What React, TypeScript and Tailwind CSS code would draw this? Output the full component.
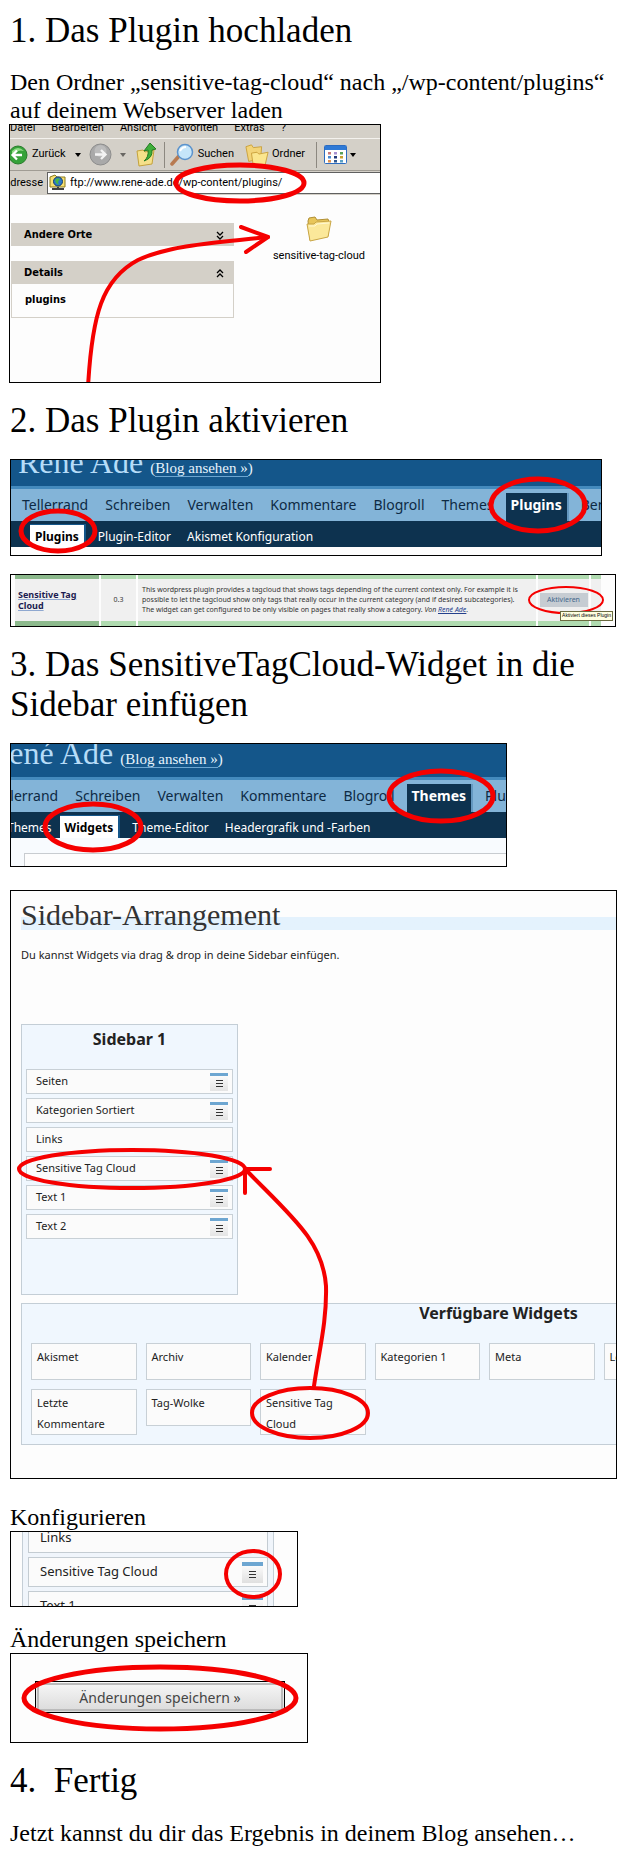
import React from "react";

type Ring = { cx: number; cy: number; rx: number; ry: number; w?: number };

function Marks({ rings = [], paths = [] }: { rings?: Ring[]; paths?: string[] }) {
  return (
    <svg
      className="pointer-events-none absolute left-0 top-0 h-full w-full overflow-hidden"
      fill="none"
      stroke="#f50000"
      strokeLinecap="round"
      strokeLinejoin="round"
      aria-hidden="true"
    >
      {rings.map((r, i) => (
        <ellipse key={i} cx={r.cx} cy={r.cy} rx={r.rx} ry={r.ry} strokeWidth={r.w ?? 5} />
      ))}
      {paths.map((d, i) => (
        <path key={i} d={d} strokeWidth={4} />
      ))}
    </svg>
  );
}

function Heading({ children }: { children: React.ReactNode }) {
  return <h2 className="text-[35px] leading-[40px]">{children}</h2>;
}

function Shot({ className, children }: { className: string; children: React.ReactNode }) {
  return (
    <figure className={`relative overflow-hidden border border-black bg-[#fdfdfd] ${className}`}>{children}</figure>
  );
}

function FolderShape() {
  return (
    <>
      <path d="M2 5 L3 2 L9 1 L11 4 L22 3 L23 6 L22 20 L4 24 Z" fill="#e8c65a" stroke="#b08f35" />
      <path d="M1 8 L8 8 L10 6 L25 5 L22 21 L4 25 Z" fill="#fbe89a" stroke="#c9a646" />
      <path d="M3 10 L9 10 L11 8 L23 7" fill="none" stroke="#fff8d4" />
    </>
  );
}

function Caret() {
  return (
    <svg width="6" height="4" viewBox="0 0 6 4" aria-hidden="true">
      <path d="M0 0 H6 L3 4 Z" fill="#000" />
    </svg>
  );
}

function Chevrons({ up }: { up?: boolean }) {
  return (
    <svg width="8" height="9" viewBox="0 0 8 9" fill="none" stroke="#000" strokeWidth="1.3" aria-hidden="true">
      {up ? <path d="M1 4 L4 1 L7 4 M1 8 L4 5 L7 8" /> : <path d="M1 1 L4 4 L7 1 M1 5 L4 8 L7 5" />}
    </svg>
  );
}

function ExplorerShot() {
  const dots = ["#c87878", "#a890d0", "#58a058", "#4888d0", "#203878", "#c8a030", "#e09050", "#305890", "#58a0c8"];
  return (
    <Shot className="-ml-px h-[259px] max-w-[372px] font-[Roboto,sans-serif]! text-[11px]">
      <div className="bg-[#d4d0c8]">
        <div className="flex h-[14px] items-end gap-[16px] overflow-hidden border-b border-[#f4f2ee] pb-[5px] leading-[11px]">
          <span>Datei</span>
          <span>Bearbeiten</span>
          <span>Ansicht</span>
          <span>Favoriten</span>
          <span>Extras</span>
          <span>?</span>
        </div>
        <div className="flex h-[32px] items-center border-b border-[#a09c94]">
          <button className="flex items-center">
            <svg className="-ml-[2px] mr-[4px]" width="20" height="20" viewBox="0 0 20 20" aria-hidden="true">
              <circle cx="10" cy="10" r="9" fill="#36a23a" stroke="#2a7c2c" />
              <path d="M4 6 Q10 0 16 6 Q10 4 4 9 Z" fill="#8fdc86" />
              <path d="M14 10 H5 M9 5.500 L4.500 10 L9 14.500" fill="none" stroke="#fff" strokeWidth="2.300" />
            </svg>
            Zurück
          </button>
          <span className="ml-[9px]">
            <Caret />
          </span>
          <svg className="ml-[8px]" width="23" height="23" viewBox="0 0 23 23" aria-hidden="true">
            <circle cx="11.500" cy="11.500" r="10.500" fill="#a9a9a9" stroke="#8c8c8c" />
            <circle cx="11.500" cy="8" r="6" fill="#bcbcbc" />
            <path d="M6 11.500 H16 M12 7 L16.500 11.500 L12 16" fill="none" stroke="#f4f4f4" strokeWidth="2.400" />
          </svg>
          <span className="ml-[8px] opacity-50">
            <Caret />
          </span>
          <svg className="ml-[10px]" width="21" height="25" viewBox="0 0 21 25" aria-hidden="true">
            <path d="M1 9 L7 8 L9 10 L18 8 L16 22 L3 24 Z" fill="#f5e08a" stroke="#c4a23c" />
            <path d="M8 19 Q13 15 12 8 L8 9 L14 1 L20 7 L16 8 Q17 16 8 19 Z" fill="#3fae3a" stroke="#247a22" />
          </svg>
          <span className="ml-[7px] h-[26px] w-px bg-[#8c8880]" />
          <svg className="ml-[5px]" width="24" height="24" viewBox="0 0 24 24" aria-hidden="true">
            <path d="M9 13 L2 21" stroke="#b87a50" strokeWidth="3.500" strokeLinecap="round" />
            <circle cx="15" cy="9" r="7.500" fill="#c6e6fa" stroke="#5c93cc" strokeWidth="1.500" />
            <path d="M10 8 Q12 4 16 4" stroke="#fff" strokeWidth="2" fill="none" />
          </svg>
          <button className="ml-[4px]">Suchen</button>
          <svg className="ml-[11px]" width="24" height="24" viewBox="0 0 26 26" aria-hidden="true">
            <path d="M1 4 L7 2 L9 5 L18 4 L17 17 L4 20 Z" fill="#f3d478" stroke="#c9a03c" />
            <path d="M7 11 L13 10 L15 12 L25 10 L22 23 L9 25 Z" fill="#fbe68e" stroke="#c9a03c" />
          </svg>
          <button className="ml-[3px]">Ordner</button>
          <span className="ml-[11px] h-[26px] w-px bg-[#8c8880]" />
          <svg className="ml-[7px]" width="24" height="20" viewBox="0 0 24 20" aria-hidden="true">
            <rect x="0.500" y="0.500" width="22" height="18" rx="1" fill="#fff" stroke="#2c6cc0" />
            <rect x="1" y="1" width="21" height="4" fill="#2f7ad6" />
            {dots.map((c, i) => (
              <rect key={i} x={4 + (i % 3) * 6} y={7 + Math.floor(i / 3) * 4} width="3" height="2.500" fill={c} />
            ))}
          </svg>
          <span className="ml-[2px]">
            <Caret />
          </span>
        </div>
        <div className="flex h-[24px] items-center">
          <label htmlFor="adresse" className="-ml-[7px] mr-[4px]">
            Adresse
          </label>
          <div className="flex h-[22px] flex-1 items-center border border-r-0 border-[#606060] bg-white pl-px">
            <svg width="18" height="18" viewBox="0 0 18 18" aria-hidden="true">
              <path d="M1 3 L6 1 L8 3 H16 V13 H1 Z" fill="#f7e070" stroke="#8a7a20" />
              <circle cx="9" cy="7.500" r="4.500" fill="#2c78c8" stroke="#123c70" />
              <path d="M6 6 Q8 3 11 5 L9 8 L10 11 L7 9 Z" fill="#46b648" />
              <path d="M3 15 H15 M9 13 V16" stroke="#404040" strokeWidth="2" />
            </svg>
            <input
              id="adresse"
              className="min-w-0 flex-1 bg-transparent pl-[3px] outline-none"
              defaultValue="ftp://www.rene-ade.de/wp-content/plugins/"
            />
          </div>
        </div>
      </div>
      <div className="flex">
        <div className="ml-px mt-[28px] w-[223px] shrink-0 font-['DejaVu_Sans_Condensed','DejaVu_Sans',sans-serif] font-bold">
          <div className="flex h-[23px] items-center justify-between bg-[#d4d0c8] pl-[13px] pr-[10px] pt-[2px]">
            Andere Orte
            <Chevrons />
          </div>
          <div className="mt-[15px] flex h-[23px] items-center justify-between bg-[#d4d0c8] pl-[13px] pr-[10px] pt-[2px]">
            Details
            <Chevrons up />
          </div>
          <div className="flex h-[34px] items-center border border-t-0 border-[#d4d0c8] pl-[13px]">plugins</div>
        </div>
        <div className="ml-[30px] mt-[21px] flex w-[110px] flex-col items-center">
          <svg width="27" height="27" viewBox="0 0 27 27" aria-hidden="true">
            <FolderShape />
          </svg>
          <span className="mt-[6px] leading-[14px]">sensitive-tag-cloud</span>
        </div>
      </div>
      <Marks
        rings={[{ cx: 230, cy: 58, rx: 64, ry: 18 }]}
        paths={["M78 262 C82 190 92 154 128 135 C158 121 200 118 258 112", "M231 102 L258 112 L236 127"]}
      />
    </Shot>
  );
}

function BlogHeader({ className, nudge }: { className: string; nudge: string }) {
  return (
    <div className={`flex items-end overflow-hidden border-b-[3px] border-[#448abd] bg-[#14568a] ${className}`}>
      <div className={`flex items-baseline gap-[7px] whitespace-nowrap font-['Liberation_Serif',serif] ${nudge}`}>
        <span className="text-[32px] leading-[32px] text-[#b6dcf8]">René Ade</span>
        <span className="text-[15px] leading-[20px] text-[#e6f3fc]">
          (
          <a href="#blog" className="border-b border-[#6da6d1]">
            Blog ansehen »
          </a>
          )
        </span>
      </div>
    </div>
  );
}

function MainNav({ items, active, nudge }: { items: string[]; active: string; nudge: string }) {
  return (
    <nav className="flex h-[32px] items-end overflow-hidden bg-[#83b4d8] text-[14px] text-[#0d2a44]">
      <div className={`flex gap-px ${nudge}`}>
        {items.map((t) => (
          <a
            key={t}
            href={`#${t}`}
            className={
              t === active
                ? "mx-[3px] h-[28px] border-r-2 border-[#6498c0] bg-[#0d324f] px-[5px] font-bold leading-[24px] text-white"
                : "h-[28px] px-[8px] leading-[24px]"
            }
          >
            {t}
          </a>
        ))}
      </div>
    </nav>
  );
}

function SubNav({ items, active, nudge }: { items: string[]; active: string; nudge: string }) {
  return (
    <nav className="flex h-[26px] items-end bg-[#0d324f] text-[12px] text-white">
      <div className={`flex whitespace-nowrap ${nudge}`}>
        {items.map((t) => (
          <a
            key={t}
            href={`#sub-${t}`}
            className={
              t === active
                ? "mr-[4px] h-[23px] border-r-2 border-t border-[#14568a] bg-white px-[5px] font-bold leading-[24px] text-black"
                : "h-[23px] px-[8px] leading-[26px]"
            }
          >
            {t}
          </a>
        ))}
      </div>
    </nav>
  );
}

const tabs = ["Tellerrand", "Schreiben", "Verwalten", "Kommentare", "Blogroll", "Themes", "Plugins", "Benutzer"];

function Strip({ h }: { h: string }) {
  return (
    <tr className={h}>
      <td className="bg-[#8cb98c]" />
      <td className="bg-[#b0dbb0]" />
      <td className="bg-[#b0dbb0]" />
      <td className="bg-[#b0dbb0]" />
      <td className="bg-[#b0dbb0]" />
    </tr>
  );
}

function PluginRowShot() {
  return (
    <Shot className="mt-[18px] h-[53px] max-w-[606px]">
      <table className="ml-[2px] w-[590px] table-fixed border-separate border-spacing-x-[2px] border-spacing-y-0 text-[7px] leading-[10px] text-[#333]">
        <colgroup>
          <col className="w-[84px]" />
          <col className="w-[35px]" />
          <col />
          <col className="w-[51px]" />
          <col className="w-[10px]" />
        </colgroup>
        <tbody>
          <Strip h="h-[4px]" />
          <tr className="h-[42px] bg-[#f0f0f0]">
            <td className="pl-[3px] text-[9px] font-bold leading-[11px] text-[#1c1c50]">
              <a href="#plugin" className="underline decoration-[#8fa8d0]">
                Sensitive Tag Cloud
              </a>
            </td>
            <td className="text-center">0.3</td>
            <td className="whitespace-nowrap pl-[4px]">
              This wordpress plugin provides a tagcloud that shows tags depending of the current context only. For example it is
              <br />
              possible to let the tagcloud show only tags that really occur in the current category (and if desired subcategories).
              <br />
              The widget can get configured to be only visible on pages that really show a category.{" "}
              <i>
                Von{" "}
                <a href="#autor" className="text-[#24408c] underline">
                  René Ade
                </a>
                .
              </i>
            </td>
            <td>
              <button className="mx-auto block h-[14px] w-[48px] bg-[#c6ccd2] text-[#44688c]">Aktivieren</button>
            </td>
            <td />
          </tr>
          <Strip h="h-[5px]" />
        </tbody>
      </table>
      <Marks rings={[{ cx: 555, cy: 25, rx: 37, ry: 13, w: 2 }]} />
      <div className="absolute right-[2px] top-[36px] flex h-[10px] items-center whitespace-nowrap border border-[#6b6b40] bg-[#ffffe1] px-px font-['Liberation_Sans',sans-serif] text-[5px] text-black">
        Aktiviert dieses Plugin
      </div>
    </Shot>
  );
}

function ConfigButton({ big, label }: { big?: boolean; label: string }) {
  return (
    <button
      aria-label={label}
      className={
        big
          ? "flex h-[21px] w-[21px] items-center justify-center border-t-4 border-[#6da6d1] bg-linear-to-b from-[#fafafa] to-[#e0e0e0]"
          : "flex h-[18px] w-[18px] items-center justify-center border-t-[3px] border-[#6da6d1] bg-linear-to-b from-[#fafafa] to-[#e4e4e4]"
      }
    >
      <svg width="7" height="7" viewBox="0 0 7 7" stroke="#333" aria-hidden="true">
        <path d="M0 0.500 H7 M0 3.500 H7 M0 6.500 H7" />
      </svg>
    </button>
  );
}

function ArrangementShot() {
  const items = ["Seiten", "Kategorien Sortiert", "Links", "Sensitive Tag Cloud", "Text 1", "Text 2"];
  const widgets = ["Akismet", "Archiv", "Kalender", "Kategorien 1", "Meta", "Letzte Beiträge"];
  const widgets2 = ["Letzte Kommentare", "Tag-Wolke", "Sensitive Tag Cloud"];
  const card = "min-h-[37px] border border-[#c8d0d6] bg-[#fbfbfb] pl-[5px] pr-[30px] pt-[2px] leading-[21px]";
  return (
    <Shot className="mt-[23px] h-[589px] max-w-[607px] pl-[10px] text-[11px] text-[#222]">
      <h3 className="mt-[9px] h-[30px] bg-linear-to-b from-transparent from-[17px] to-[#e4f2fd] to-[17px] font-['Liberation_Serif',serif] text-[30px] leading-[30px] text-[#333]">
        Sidebar-Arrangement
      </h3>
      <p className="mt-[17px] leading-[16px]">Du kannst Widgets via drag &amp; drop in deine Sidebar einfügen.</p>
      <section className="mt-[61px] h-[271px] w-[217px] border border-[#c4ced6] bg-[#f0f7fe] px-[4px]">
        <h4 className="pt-[4px] text-center text-[16px] font-bold leading-[20px]">Sidebar 1</h4>
        <ul className="mt-[20px] flex flex-col gap-[4px]">
          {items.map((t) => (
            <li
              key={t}
              className="flex h-[25px] items-center justify-between border border-[#c8d0d6] bg-[#fbfbfb] pl-[9px] pr-[4px]"
            >
              {t}
              {t !== "Links" && <ConfigButton label={`${t} konfigurieren`} />}
            </li>
          ))}
        </ul>
      </section>
      <section className="mt-[8px] h-[142px] w-[946px] border border-[#c4ced6] bg-[#f0f7fe] pl-[9px]">
        <h4 className="text-center text-[16px] font-bold leading-[19px]">Verfügbare Widgets</h4>
        <div className="mt-[20px] grid w-[678px] grid-cols-6 items-start gap-[9px]">
          {widgets.map((t) => (
            <div key={t} className={card}>
              <span className="whitespace-nowrap">{t}</span>
            </div>
          ))}
          {widgets2.map((t) => (
            <div key={t} className={card}>
              {t}
            </div>
          ))}
        </div>
      </section>
      <Marks
        rings={[
          { cx: 121, cy: 278, rx: 113, ry: 19, w: 4 },
          { cx: 299, cy: 522, rx: 58, ry: 25, w: 4 },
        ]}
        paths={["M236 280 C280 325 312 350 315 395 C316 430 308 460 303 495", "M259 278 H234 V302"]}
      />
    </Shot>
  );
}

function ConfigShot() {
  const row = "flex h-[30px] shrink-0 items-center justify-between border border-[#c4ccd2] bg-[#fbfbfb] pl-[11px] pr-[4px]";
  return (
    <Shot className="h-[76px] max-w-[288px] pl-[11px] text-[13px] text-[#222]">
      <div className="-mt-[10px] flex h-[100px] w-[252px] flex-col gap-[4px] border border-[#c4ced6] bg-[#f0f5fb] px-[5px]">
        <div className={row}>Links</div>
        <div className={row}>
          Sensitive Tag Cloud
          <ConfigButton big label="Sensitive Tag Cloud konfigurieren" />
        </div>
        <div className={row}>
          Text 1
          <ConfigButton big label="Text 1 konfigurieren" />
        </div>
      </div>
      <Marks rings={[{ cx: 242, cy: 42, rx: 27, ry: 23, w: 4 }]} />
    </Shot>
  );
}

export default function App() {
  return (
    <main className="bg-white px-[10px] pb-3 pt-[11px] font-['Liberation_Serif',serif] text-black [&_figure]:font-['Noto_Sans',sans-serif]">
      <Heading>1. Das Plugin hochladen</Heading>
      <p className="mt-[17px] text-[24px] leading-[28px]">
        Den Ordner „sensitive-tag-cloud“ nach „/wp-content/plugins“
        <br />
        auf deinem Webserver laden
      </p>
      <ExplorerShot />

      <div className="mt-[18px]">
        <Heading>2. Das Plugin aktivieren</Heading>
      </div>
      <Shot className="mt-[18px] h-[97px] max-w-[592px]">
        <BlogHeader className="h-[29px]" nudge="mb-[8px] ml-[7px]" />
        <MainNav items={tabs} active="Plugins" nudge="ml-[3px]" />
        <SubNav items={["Plugins", "Plugin-Editor", "Akismet Konfiguration"]} active="Plugins" nudge="ml-[19px]" />
        <Marks
          rings={[
            { cx: 527, cy: 45, rx: 47, ry: 26 },
            { cx: 47, cy: 71, rx: 37, ry: 20 },
          ]}
        />
      </Shot>
      <PluginRowShot />

      <div className="mt-[18px]">
        <Heading>
          3. Das SensitiveTagCloud-Widget in die
          <br />
          Sidebar einfügen
        </Heading>
      </div>
      <Shot className="mt-[18px] h-[124px] max-w-[497px]">
        <BlogHeader className="h-[36px]" nudge="mb-[8px] -ml-[23px]" />
        <MainNav items={tabs} active="Themes" nudge="-ml-[27px]" />
        <SubNav
          items={["Themes", "Widgets", "Theme-Editor", "Headergrafik und -Farben"]}
          active="Widgets"
          nudge="-ml-[12px]"
        />
        <div className="h-[40px] bg-[#f8fbfe] pl-[13px] pt-[15px]">
          <div className="h-[30px] border-l border-t border-[#c8ccd0] bg-[#fdfdfd]" />
        </div>
        <Marks
          rings={[
            { cx: 430, cy: 52, rx: 52, ry: 25 },
            { cx: 82, cy: 83, rx: 48, ry: 23 },
          ]}
        />
      </Shot>
      <ArrangementShot />

      <p className="mt-[24px] text-[24px] leading-[28px]">Konfigurieren</p>
      <ConfigShot />
      <p className="mt-[18px] text-[24px] leading-[28px]">Änderungen speichern</p>
      <Shot className="h-[90px] max-w-[298px] pl-[24px] pt-[27px]">
        <button className="block h-[32px] w-[250px] border border-black bg-linear-to-b from-[#f8f8f8] to-[#dadada] text-[14px] text-[#444] outline-2 -outline-offset-[4px] outline-[#bbb]">
          Änderungen speichern »
        </button>
        <Marks rings={[{ cx: 149, cy: 44, rx: 136, ry: 31 }]} />
      </Shot>

      <div className="mt-[18px]">
        <Heading>4.&nbsp; Fertig</Heading>
      </div>
      <p className="mt-[18px] text-[24px] leading-[28px]">Jetzt kannst du dir das Ergebnis in deinem Blog ansehen…</p>
    </main>
  );
}
